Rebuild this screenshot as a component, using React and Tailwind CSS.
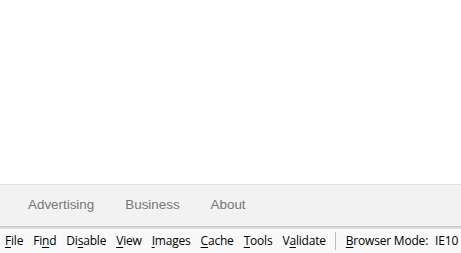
import React from "react";

const Item = ({ pre, u, post, className = "" }) => (
  <span className={className}>
    {pre}
    <span className="underline underline-offset-2">{u}</span>
    {post}
  </span>
);

const App = () => {
  return (
    <div className="w-[461px] h-[253px] flex flex-col bg-white overflow-hidden">
      <div className="flex-1" />
      <div className="h-[42px] bg-[#f2f2f2] border-t border-[#e4e4e4] flex items-center pl-[28px] gap-[31px] text-[13.4px] text-[#777] font-['Liberation_Sans',Arial,sans-serif]">
        <span>Advertising</span>
        <span>Business</span>
        <span>About</span>
      </div>
      <div className="h-[3px] bg-gradient-to-b from-[#c8c8c8] to-[#e8e8e8]" />
      <div className="h-[24px] bg-[#f9f9f9] flex items-center pl-[5px] text-[12px] text-black font-['Open_Sans','Noto_Sans',sans-serif] tracking-[-0.2px]">
        <Item u="F" post="ile" className="mr-[10px]" />
        <Item pre="Fi" u="n" post="d" className="mr-[10px]" />
        <Item pre="Di" u="s" post="able" className="mr-[10px]" />
        <Item u="V" post="iew" className="mr-[10px]" />
        <Item u="I" post="mages" className="mr-[10px]" />
        <Item u="C" post="ache" className="mr-[10px]" />
        <Item u="T" post="ools" className="mr-[10px]" />
        <Item pre="V" u="a" post="lidate" className="mr-[9px]" />
        <span className="w-px h-[18px] bg-[#bbb] mr-[10px]" />
        <Item u="B" post="rowser Mode:" className="mr-[7px]" />
        <span>IE10</span>
      </div>
    </div>
  );
};

export default App;
